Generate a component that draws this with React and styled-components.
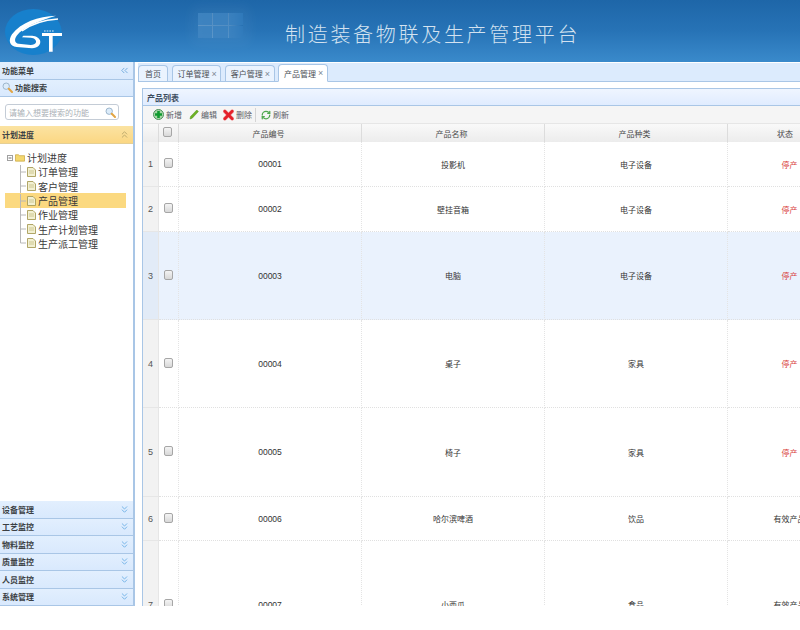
import React from 'react';
import styled, { createGlobalStyle } from 'styled-components';
import { ChevronsLeft, ChevronsUp, ChevronsDown, RefreshCw } from 'lucide-react';

const GlobalStyle = createGlobalStyle`
  html, body { margin: 0; padding: 0; background: #fff; }
  body { font-family: "Liberation Sans", "Noto Sans CJK SC", sans-serif; font-size: 8px; color: #333; }
`;

const Page = styled.div`
  width: 800px;
  height: 606px;
  overflow: hidden;
  display: flex;
  flex-direction: column;
`;

const Header = styled.div`
  height: 62px;
  flex: none;
  box-sizing: border-box;
  padding-top: 5px;
  display: flex;
  align-items: flex-start;
  position: relative;
  overflow: hidden;
  background: linear-gradient(180deg, #1e66a8 0%, #2773b6 50%, #3a8acb 100%);
`;

const Glow = styled.div`
  position: absolute;
  left: 198px;
  top: 13px;
  width: 45px;
  height: 25px;
  display: grid;
  grid-template-columns: repeat(3, 1fr);
  grid-template-rows: repeat(2, 1fr);
  gap: 1px;
  filter: blur(0.6px);
  background: linear-gradient(90deg, rgba(255, 255, 255, 0.26), rgba(255, 255, 255, 0.2) 70%, rgba(255, 255, 255, 0));
  box-shadow: 0 0 14px 6px rgba(255, 255, 255, 0.05);
`;

const GlowPane = styled.span`
  background: rgba(52, 126, 190, 0.75);
`;

const LogoWrap = styled.div`
  width: 285px;
  flex: none;
  display: flex;
`;

const Title = styled.div`
  font-size: 20px;
  font-weight: 300;
  letter-spacing: 2.7px;
  line-height: 24px;
  color: #d3e2f0;
  margin-top: 17px;
  white-space: nowrap;
  font-family: "Noto Sans CJK SC", sans-serif;
  position: relative;
`;

const Body = styled.div`
  flex: 1;
  display: flex;
  min-height: 0;
  background: #fff;
`;

const West = styled.div`
  width: 135px;
  flex: none;
  box-sizing: border-box;
  display: flex;
  flex-direction: column;
  border-right: 2px solid #a9c6e6;
`;

const PanelHead = styled.div`
  height: 17.5px;
  flex: none;
  box-sizing: border-box;
  display: flex;
  align-items: center;
  justify-content: space-between;
  padding: 0 3px 0 2px;
  font-size: 8px;
  font-weight: bold;
  color: #3b3f44;
  background: ${p => p.$active
    ? 'linear-gradient(180deg, #fbe3a2, #fbd783)'
    : 'linear-gradient(180deg, #e2effe, #d9e9fd)'};
  border-bottom: 1px solid ${p => p.$active ? '#e5cf95' : '#a9c6e6'};
`;

const HeadLabel = styled.span`
  display: flex;
  align-items: center;
  gap: 2px;
`;

const SearchBox = styled.div`
  height: 29px;
  flex: none;
  box-sizing: border-box;
  padding: 7px 14px 6px 5px;
`;

const SearchField = styled.div`
  height: 16px;
  box-sizing: border-box;
  border: 1px solid #c4ccd6;
  border-radius: 3px;
  display: flex;
  align-items: center;
  justify-content: space-between;
  padding: 0 2px 0 3px;
  color: #aab0b6;
  font-size: 8px;
`;

const TreeArea = styled.div`
  flex: 1;
  padding: 7px 7px 0 5px;
`;

const TreeRow = styled.div`
  height: 14.3px;
  display: flex;
  align-items: center;
  padding-left: ${p => p.$root ? 2 : 15}px;
  gap: ${p => p.$root ? 2 : 1}px;
  font-size: 10px;
  color: #3a3a3a;
  background: ${p => p.$selected ? '#fbd980' : 'transparent'};
`;

const TreeLabel = styled.span`
  margin-left: 1px;
`;

const Main = styled.div`
  flex: 1;
  min-width: 0;
  padding-left: 3px;
  display: flex;
  flex-direction: column;
`;

const TabBar = styled.div`
  height: 19px;
  flex: none;
  margin-top: 1px;
  box-sizing: border-box;
  display: flex;
  align-items: flex-end;
  gap: 3.5px;
  background: #dcebfd;
  border-bottom: 1px solid #a9c6e6;
`;

const Tab = styled.div`
  height: ${p => p.$active ? 18 : 16}px;
  box-sizing: border-box;
  display: flex;
  align-items: center;
  gap: 2px;
  padding: ${p => p.$home ? '0 6px' : '0 3.5px 0 5px'};
  font-size: 8px;
  color: #4a4f55;
  background: ${p => p.$active ? '#fff' : '#eaf3fe'};
  border: 1px solid #a9c6e6;
  border-bottom: ${p => p.$active ? '1px solid #fff' : '0'};
  border-radius: 4px 4px 0 0;
  margin-bottom: ${p => p.$active ? -1 : 0}px;
`;

const TabClose = styled.span`
  color: #7b8794;
  font-size: 9px;
`;

const Content = styled.div`
  flex: 1;
  min-height: 0;
  padding: 6px 0 0 4px;
  display: flex;
  flex-direction: column;
  overflow: hidden;
`;

const ListPanel = styled.div`
  flex: 1;
  min-height: 0;
  overflow: hidden;
  border-left: 1px solid #a9c6e6;
  border-top: 1px solid #a9c6e6;
`;

const ListTitle = styled.div`
  height: 17px;
  box-sizing: border-box;
  display: flex;
  align-items: center;
  padding-left: 4px;
  font-size: 8px;
  font-weight: bold;
  color: #3d4d60;
  background: linear-gradient(180deg, #eff5ff, #e0ecff);
  border-bottom: 1px solid #a9c6e6;
`;

const Toolbar = styled.div`
  height: 18px;
  box-sizing: border-box;
  display: flex;
  align-items: center;
  padding-left: 10px;
  background: #f5f5f5;
  border-bottom: 1px solid #e6e6e6;
`;

const ToolButton = styled.span`
  display: flex;
  align-items: center;
  gap: 2px;
  font-size: 8px;
  color: #5c6066;
  margin-right: ${p => p.$gap || 0}px;
`;

const ToolSep = styled.span`
  width: 1px;
  height: 14px;
  background: #d4d4d4;
  margin-right: 5px;
`;

const Grid = styled.div`
  display: grid;
  grid-template-columns: 16px 20px 183px 183px 183px 118px;
  width: 703px;
`;

const HeadCell = styled.div`
  height: 18px;
  box-sizing: border-box;
  display: flex;
  align-items: center;
  justify-content: center;
  padding-right: 3px;
  font-size: 8px;
  color: #4b4b4b;
  background: linear-gradient(180deg, #f9f9f9, #ececec);
  border-right: 1px solid #dcdcdc;
`;

const Cell = styled.div`
  height: ${p => p.$h}px;
  box-sizing: border-box;
  display: flex;
  align-items: center;
  justify-content: center;
  padding-left: ${p => p.$shift || 0}px;
  font-size: 8px;
  color: ${p => p.$red ? '#d9413c' : '#333'};
  background: ${p => p.$hi ? '#eaf2fd' : '#fff'};
  border-right: 1px dotted #e4e4e4;
  border-bottom: 1px dotted #e0e0e0;
`;

const CodeCell = styled(Cell)`
  font-size: 8.5px;
`;

const NumCell = styled(Cell)`
  background: ${p => p.$hi ? '#e2ebf7' : '#f2f2f2'};
  border-right: 1px solid #e6e6e6;
  border-bottom: 1px solid #e6e6e6;
  font-size: 9px;
  color: #555;
`;

const Check = styled.span`
  width: 9px;
  height: 10px;
  box-sizing: border-box;
  border: 1px solid #a6a6a6;
  border-radius: 2px;
  background: linear-gradient(180deg, #f4f4f4, #d8d8d8);
  margin-bottom: 2px;
`;

const Logo = () => (
  <svg width="70" height="55" viewBox="0 0 210 165">
    <ellipse cx="100" cy="81" rx="85" ry="69" fill="#1780cc" />
    <path
      d="M168 32 C115 34 62 52 36 88 C24 106 28 124 50 126 L96 130 C114 130 124 118 120 106 C116 96 104 92 92 92 L70 92 L66 97 L92 98 C104 99 110 106 108 112 C106 118 100 120 92 120 L56 116 C44 114 42 104 50 92 C70 66 115 48 168 32 Z"
      fill="#fff"
    />
    <path d="M174 42 C130 45 92 58 66 78" fill="none" stroke="#fff" strokeWidth="4" />
    <path d="M126 84 H186 V93 H158 V140 H147 V93 H126 Z" fill="#fff" />
    <path d="M132 78 H162" stroke="#d8ecfa" strokeWidth="3" strokeDasharray="5 3" />
  </svg>
);

const SearchIcon = () => (
  <svg width="11" height="11" viewBox="0 0 11 11">
    <circle cx="4.2" cy="4.2" r="3.2" fill="#dcecfa" stroke="#9db6cc" strokeWidth="1" />
    <path d="M6.8 6.8 L10 10" stroke="#e2a544" strokeWidth="2" strokeLinecap="round" />
  </svg>
);

const FoldIcon = () => (
  <svg width="6" height="6" viewBox="0 0 6 6">
    <rect x="0.5" y="0.5" width="5" height="5" fill="#fff" stroke="#a0a0a0" strokeWidth="1" />
    <path d="M1.5 3 H4.5" stroke="#707070" strokeWidth="1" />
  </svg>
);

const FolderIcon = () => (
  <svg width="10" height="9" viewBox="0 0 11 9">
    <path d="M0.5 1.5 L4 1.5 L5 2.5 L10.5 2.5 L10.5 8.5 L0.5 8.5 Z" fill="#f4d86f" stroke="#c9a63f" strokeWidth="0.8" />
  </svg>
);

const FileIcon = () => (
  <svg width="9" height="10" viewBox="0 0 9 10">
    <path d="M0.5 0.5 L6 0.5 L8.5 3 L8.5 9.5 L0.5 9.5 Z" fill="#f2f0d2" stroke="#a89c58" strokeWidth="0.9" />
    <path d="M2 4 H7 M2 6 H7" stroke="#c5bc80" strokeWidth="0.8" />
  </svg>
);

const Connector = ({ last }) => (
  <svg width="6" height="14" viewBox="0 0 6 14">
    <path d={last ? 'M0.5 0 V7 H6' : 'M0.5 0 V14 M0.5 7 H6'} fill="none" stroke="#b8b8b8" strokeWidth="1" />
  </svg>
);

const AddIcon = () => (
  <svg width="11" height="11" viewBox="0 0 11 11">
    <circle cx="5.5" cy="5.5" r="5" fill="#a8d8a8" stroke="#4d8f5a" strokeWidth="1" />
    <path d="M5.5 2 V9 M2 5.5 H9" stroke="#0f9a2e" strokeWidth="2.6" />
  </svg>
);

const EditIcon = () => (
  <svg width="10" height="11" viewBox="0 0 10 11">
    <path d="M1 10 L1.6 7.4 L7.8 1 L9.4 2.6 L3.2 9.2 Z" fill="#6cb221" stroke="#578f1b" strokeWidth="0.5" />
  </svg>
);

const DeleteIcon = () => (
  <svg width="11" height="12" viewBox="0 0 12 12">
    <path d="M2 2 L10 10 M10 2 L2 10" stroke="#f0b0b0" strokeWidth="4.4" strokeLinecap="round" />
    <path d="M2 2 L10 10 M10 2 L2 10" stroke="#e4202a" strokeWidth="3" strokeLinecap="round" />
  </svg>
);

const accordion = ['设备管理', '工艺监控', '物料监控', '质量监控', '人员监控', '系统管理'];
const tree = ['订单管理', '客户管理', '产品管理', '作业管理', '生产计划管理', '生产派工管理'];
const rows = [
  { no: '00001', name: '投影机', kind: '电子设备', state: '停产', h: 45 },
  { no: '00002', name: '壁挂音箱', kind: '电子设备', state: '停产', h: 45 },
  { no: '00003', name: '电脑', kind: '电子设备', state: '停产', h: 88, hi: true },
  { no: '00004', name: '桌子', kind: '家具', state: '停产', h: 88 },
  { no: '00005', name: '椅子', kind: '家具', state: '停产', h: 89 },
  { no: '00006', name: '哈尔滨啤酒', kind: '饮品', state: '有效产品', h: 44 },
  { no: '00007', name: '小西瓜', kind: '食品', state: '有效产品', h: 128 },
];

export default function App() {
  return (
    <Page>
      <GlobalStyle />
      <Header>
        <Glow>
          {[0, 1, 2, 3, 4, 5].map(i => <GlowPane key={i} />)}
        </Glow>
        <LogoWrap><Logo /></LogoWrap>
        <Title>制造装备物联及生产管理平台</Title>
      </Header>
      <Body>
        <West>
          <PanelHead>
            <span>功能菜单</span>
            <ChevronsLeft size={11} color="#6fa8dc" />
          </PanelHead>
          <PanelHead>
            <HeadLabel><SearchIcon />功能搜索</HeadLabel>
          </PanelHead>
          <SearchBox>
            <SearchField>
              <span>请输入想要搜索的功能</span>
              <SearchIcon />
            </SearchField>
          </SearchBox>
          <PanelHead $active>
            <span>计划进度</span>
            <ChevronsUp size={11} color="#b9a66a" />
          </PanelHead>
          <TreeArea>
            <TreeRow $root>
              <FoldIcon /><FolderIcon />计划进度
            </TreeRow>
            {tree.map((t, i) => (
              <TreeRow key={t} $selected={t === '产品管理'}>
                <Connector last={i === tree.length - 1} />
                <FileIcon />
                <TreeLabel>{t}</TreeLabel>
              </TreeRow>
            ))}
          </TreeArea>
          {accordion.map(a => (
            <PanelHead key={a}>
              <span>{a}</span>
              <ChevronsDown size={11} color="#6fb0e6" />
            </PanelHead>
          ))}
        </West>
        <Main>
          <TabBar>
            <Tab $home>首页</Tab>
            <Tab>订单管理<TabClose>×</TabClose></Tab>
            <Tab>客户管理<TabClose>×</TabClose></Tab>
            <Tab $active>产品管理<TabClose>×</TabClose></Tab>
          </TabBar>
          <Content>
            <ListPanel>
              <ListTitle>产品列表</ListTitle>
              <Toolbar>
                <ToolButton $gap={7}><AddIcon />新增</ToolButton>
                <ToolButton $gap={6}><EditIcon />编辑</ToolButton>
                <ToolButton $gap={3}><DeleteIcon />删除</ToolButton>
                <ToolSep />
                <ToolButton><RefreshCw size={10} color="#4fa84f" strokeWidth={3} />刷新</ToolButton>
              </Toolbar>
              <Grid>
                <HeadCell />
                <HeadCell><Check /></HeadCell>
                <HeadCell>产品编号</HeadCell>
                <HeadCell>产品名称</HeadCell>
                <HeadCell>产品种类</HeadCell>
                <HeadCell>状态</HeadCell>
                {rows.map((r, i) => (
                  <React.Fragment key={r.no}>
                    <NumCell $h={r.h} $hi={r.hi}>{i + 1}</NumCell>
                    <Cell $h={r.h} $hi={r.hi}><Check /></Cell>
                    <CodeCell $h={r.h} $hi={r.hi}>{r.no}</CodeCell>
                    <Cell $h={r.h} $hi={r.hi}>{r.name}</Cell>
                    <Cell $h={r.h} $hi={r.hi}>{r.kind}</Cell>
                    <Cell $h={r.h} $hi={r.hi} $shift={6} $red={r.state === '停产'}>{r.state}</Cell>
                  </React.Fragment>
                ))}
              </Grid>
            </ListPanel>
          </Content>
        </Main>
      </Body>
    </Page>
  );
}
